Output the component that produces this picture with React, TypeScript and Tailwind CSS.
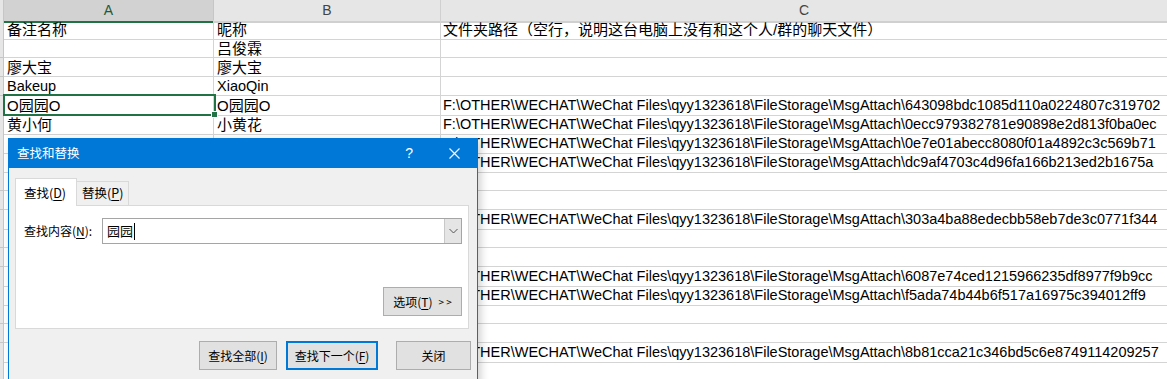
const P = "F:\\OTHER\\WECHAT\\WeChat Files\\qyy1323618\\FileStorage\\MsgAttach\\";

const rows: [string, string, string][] = [
  ["备注名称", "昵称", "文件夹路径（空行，说明这台电脑上没有和这个人/群的聊天文件）"],
  ["", "吕俊霖", ""],
  ["廖大宝", "廖大宝", ""],
  ["Bakeup", "XiaoQin", ""],
  ["O园园O", "O园园O", P + "643098bdc1085d110a0224807c319702"],
  ["黄小何", "小黄花", P + "0ecc979382781e90898e2d813f0ba0ec"],
  ["", "", P + "0e7e01abecc8080f01a4892c3c569b71"],
  ["", "", P + "dc9af4703c4d96fa166b213ed2b1675a"],
  ["", "", ""],
  ["", "", ""],
  ["", "", P + "303a4ba88edecbb58eb7de3c0771f344"],
  ["", "", ""],
  ["", "", ""],
  ["", "", P + "6087e74ced1215966235df8977f9b9cc"],
  ["", "", P + "f5ada74b44b6f517a16975c394012ff9"],
  ["", "", ""],
  ["", "", ""],
  ["", "", P + "8b81cca21c346bd5c6e8749114209257"],
  ["", "", ""],
];

// CJK text in the sheet renders a touch larger than the Latin paths
const size = (s: string) => (/[\u4e00-\u9fff]/.test(s) ? "text-[15px]" : "text-[14.5px]");

function Btn({ children, w, primary }: { children: React.ReactNode; w: string; primary?: boolean }) {
  return (
    <div
      className={`${w} h-[29px] flex items-center justify-center bg-[#e1e1e1] text-[12px] text-black ${
        primary ? "border-2 border-[#0078d7]" : "border border-[#adadad]"
      }`}
    >
      {children}
    </div>
  );
}

export default function App() {
  return (
    <div className="relative w-[1167px] h-[379px] overflow-hidden bg-white font-['Liberation_Sans','Noto_Sans_CJK_SC',sans-serif] text-black">
      {/* column headers */}
      <div className="grid grid-cols-[4px_210px_227px_1fr] h-[20px] text-[14px]">
        <div className="bg-[#e6e6e6] border-r border-b-2 border-[#c6c6c6]" />
        <div className="bg-[#d2d2d2] border-r border-[#c6c6c6] border-b-2 border-b-[#217346] flex items-center justify-center text-[#1d5a38]">
          A
        </div>
        <div className="bg-[#e6e6e6] border-r border-b-2 border-[#d0d0d0] flex items-center justify-center text-[#444]">
          B
        </div>
        <div className="bg-[#e6e6e6] border-b-2 border-[#d0d0d0] flex items-center justify-center text-[#444]">
          C
        </div>
      </div>

      {/* cells */}
      {rows.map((r, i) => (
        <div key={i} className="grid grid-cols-[4px_210px_227px_1fr] h-[19px]">
          <div className="bg-[#e6e6e6] border-r border-b border-[#c6c6c6]" />
          <div className={`border-r border-b border-[#d4d4d4] pl-[3px] leading-[19px] whitespace-nowrap overflow-hidden ${size(r[0])}`}>
            {r[0]}
          </div>
          <div className={`border-r border-b border-[#d4d4d4] pl-[3px] leading-[19px] whitespace-nowrap overflow-hidden ${size(r[1])}`}>
            {r[1]}
          </div>
          <div className={`border-b border-[#d4d4d4] pl-[2px] leading-[19px] whitespace-nowrap ${size(r[2])}`}>{r[2]}</div>
        </div>
      ))}

      {/* active cell */}
      <div className="absolute left-[3px] top-[94px] w-[213px] h-[22px] border-2 border-[#217346]" />
      <div className="absolute left-[211px] top-[111px] w-[7px] h-[7px] bg-[#217346] border border-white" />

      {/* find & replace dialog */}
      <div className="absolute left-[8px] top-[138px] w-[470px] h-[260px] border border-[#0078d7] bg-[#f0f0f0] shadow-[3px_2px_8px_rgba(0,0,0,0.18)] font-['Noto_Sans_CJK_SC',sans-serif] text-[12px]">
        <div className="h-[29px] bg-[#0078d7] flex items-center pl-[8px] text-white">
          <span className="text-[12.5px]">查找和替换</span>
          <span className="ml-auto text-[14px] font-['Liberation_Sans',sans-serif]">?</span>
          <svg className="ml-[36px] mr-[17px]" width="11" height="11" viewBox="0 0 11 11">
            <path d="M0.5 0.5 L10.5 10.5 M10.5 0.5 L0.5 10.5" stroke="white" strokeWidth="1.1" />
          </svg>
        </div>

        <div className="px-[6px] pt-[10px]">
          <div className="flex items-end h-[27px]">
            <div className="relative z-10 w-[62px] h-[28px] -mb-px bg-white border-t border-x border-[#d9d9d9] pl-[8px] pt-[5px] text-[12.5px]">
              查找(<u className="underline-offset-2">D</u>)
            </div>
            <div className="w-[52px] h-[24px] bg-[#f0f0f0] border-t border-r border-[#d9d9d9] pl-[5px] pt-[2px] text-[12.5px]">
              替换(<u className="underline-offset-2">P</u>)
            </div>
          </div>

          <div className="w-[454px] h-[124px] bg-white border border-[#d9d9d9] pt-[12px] pl-[8px] pr-[6px] flex flex-col">
            <div className="flex items-center">
              <div className="w-[78px]">
                查找内容(<u className="underline-offset-2">N</u>):
              </div>
              <div className="flex-1 h-[26px] border border-[#a5a5a5] flex">
                <div className="flex-1 flex items-center pl-[4px] text-[13px]">
                  园园<span className="ml-px w-px h-[17px] bg-black" />
                </div>
                <div className="w-[17px] bg-[#e5e5e5] border-l border-[#c8c8c8] flex items-center justify-center">
                  <svg width="9" height="6" viewBox="0 0 9 6">
                    <path d="M0.5 1 L4.5 5 L8.5 1" fill="none" stroke="#555" strokeWidth="1" />
                  </svg>
                </div>
              </div>
            </div>
            <div className="mt-[43px] self-end">
              <Btn w="w-[79px]">
                <span>
                  选项(<u className="underline-offset-2">T</u>)
                </span>
                <span className="ml-[6px] text-[10px]">&gt;&nbsp;&gt;</span>
              </Btn>
            </div>
          </div>

          <div className="mt-[12px] flex justify-end">
            <Btn w="w-[78px]">
              查找全部(<u className="underline-offset-2">I</u>)
            </Btn>
            <div className="ml-[9px]">
              <Btn w="w-[92px]" primary>
                查找下一个(<u className="underline-offset-2">F</u>)
              </Btn>
            </div>
            <div className="ml-[18px]">
              <Btn w="w-[75px]">关闭</Btn>
            </div>
          </div>
        </div>
      </div>
    </div>
  );
}
